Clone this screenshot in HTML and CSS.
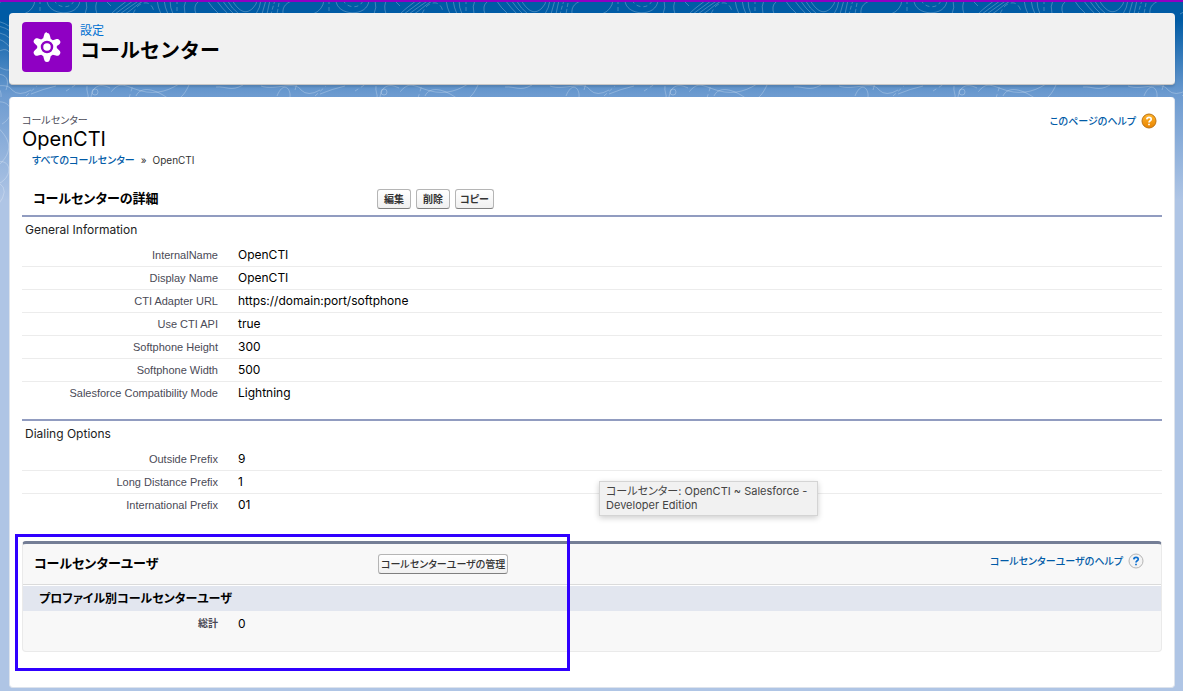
FILE: index.html
```html
<!DOCTYPE html>
<html lang="ja">
<head>
<meta charset="utf-8">
<title>コールセンター: OpenCTI ~ Salesforce - Developer Edition</title>
<link rel="stylesheet" href="styles.css">
</head>
<body>
<svg class="backdrop" aria-hidden="true">
  <defs>
    <pattern id="topo" width="289" height="280" patternUnits="userSpaceOnUse" x="111">
      <g fill="none" stroke="#fff" stroke-opacity=".25" stroke-width="1">
        <path d="M0 14C6 8 12 4 17 0M4 14C12 8 18 4 23 0M9 14C17 8 23 4 29 0M14 14C21 10 28 2 35 0"/>
        <path d="M22 14C25 7 28 4 33 3S42 6 43 12" stroke-dasharray="5 3"/>
        <path d="M46 0Q47 8 50 14M53 0Q54 8 57 14M59 0Q59 8 62 14M75 0Q72 6 74 14M85 14Q82 6 87 2"/>
        <path d="M66 0V14M218 0V14" stroke-dasharray="4 3"/>
        <path d="M96 0Q101 8 108 14M105 0Q111 8 117 14M111 0Q117 9 123 14M116 0Q121 9 128 14M121 0C127 10 134 16 142 8Q146 4 146 0M150 0Q149 8 145 14M155 0L151 14M159 0L156 14"/>
        <path d="M164 0L160 14M168 3L166 14" stroke-dasharray="4 2"/>
        <path d="M172 14C171 6 176 2 184 0M202 14Q212 10 213 0M225 0C225 16 257 18 258 0M264 0Q266 8 263 14M275 14Q272 5 276 0M283 0L289 6"/>
        <path d="M232 0C236 9 250 9 252 0" stroke-dasharray="4 3"/>
        <path d="M-5 97C8 83 8 83 24 89S54 93 68 84M25 96C30 85 45 90 55 97S72 98 78 85M105 87C115 86 120 92 132 85M150 86C164 91 184 80 190 90Q197 97 209 90M166 96C172 81 180 88 179 97M209 94Q221 89 234 86M265 86C264 91 267 95 266 98M269 97C271 84 280 84 288 88"/>
        <path d="M204 96L215 86M244 91L255 84M18 98L22 85" stroke-dasharray="4 3"/>
        <circle cx="273" cy="92" r="3"/>
        <path d="M170 20Q184 22 192 30M170 25Q184 26 195 36M170 32Q185 32 193 44M170 38Q182 38 190 50M172 55Q187 42 190 60T172 64M170 75C184 72 188 79 184 90M175 102C190 100 194 116 180 124M170 122C186 136 194 148 178 164M172 163C190 156 192 177 176 184M177 183Q188 190 176 205"/>
      </g>
    </pattern>
  </defs>
  <rect width="100%" height="280" fill="url(#topo)"/>
</svg>
<div class="page">
  <header class="banner">
    <span class="banner-icon">
      <svg viewBox="0 0 50 50" aria-hidden="true">
        <path d="M25 11c2 0 2.500 1 3 3l.8 3q1 .5 2 1.200l3-.9c2-.6 3-.2 4 1.300s.8 2.600-.7 4L34.800 24v2l2.300 2.200c1.500 1.400 1.700 2.500.7 4s-2 2-4 1.400l-3-.9q-1 .8-2 1.200l-.8 3c-.5 2-1 3-3 3s-2.500-1-3-3l-.8-3q-1-.5-2-1.200l-3 .9c-2 .6-3 .1-4-1.400s-.8-2.600.7-4l2.300-2.200v-2l-2.300-2.200c-1.500-1.400-1.700-2.500-.7-4s2-1.900 4-1.300l3 .9q1-.8 2-1.200l.8-3c.5-2 1-3 3-3z" fill="#fff"/>
        <circle cx="25" cy="25" r="5" fill="#fff" stroke="#8f00c3" stroke-width="2.500"/>
      </svg>
    </span>
    <h1 class="banner-title"><span class="banner-kicker">設定</span>コールセンター</h1>
  </header>

  <main class="sheet">
    <div class="top">
      <div>
        <h2 class="record"><span class="record-type">コールセンター</span>OpenCTI</h2>
        <nav class="crumbs"><a href="#">すべてのコールセンター</a><span>»</span><span>OpenCTI</span></nav>
      </div>
      <a class="help" href="#">このページのヘルプ
        <svg class="help-icon" viewBox="0 0 16 16" aria-hidden="true">
          <defs><linearGradient id="amber" x2="0" y2="1"><stop stop-color="#ffb52b"/><stop offset="1" stop-color="#e88300"/></linearGradient></defs>
          <circle cx="8" cy="8" r="7" fill="url(#amber)" stroke="#bc7212"/>
          <path d="M5.800 6.400C5.900 3.600 10.300 3.700 10.200 6.200C10.200 7.900 8 7.700 8 9.600M8 10.700V12.300" fill="none" stroke="#fff" stroke-width="1.700"/>
        </svg>
      </a>
    </div>

    <div class="toolbar">
      <h3 class="heading">コールセンターの詳細</h3>
      <div class="actions">
        <button type="button" class="btn">編集</button>
        <button type="button" class="btn">削除</button>
        <button type="button" class="btn btn-kana">コピー</button>
      </div>
    </div>

    <section class="group">
      <h4 class="group-title">General Information</h4>
      <table class="fields">
        <tr><th scope="row">InternalName</th><td>OpenCTI</td></tr>
        <tr><th scope="row">Display Name</th><td>OpenCTI</td></tr>
        <tr><th scope="row">CTI Adapter URL</th><td>https://domain:port/softphone</td></tr>
        <tr><th scope="row">Use CTI API</th><td>true</td></tr>
        <tr><th scope="row">Softphone Height</th><td>300</td></tr>
        <tr><th scope="row">Softphone Width</th><td>500</td></tr>
        <tr><th scope="row">Salesforce Compatibility Mode</th><td>Lightning</td></tr>
      </table>
    </section>

    <section class="group">
      <h4 class="group-title">Dialing Options</h4>
      <table class="fields">
        <tr><th scope="row">Outside Prefix</th><td>9</td></tr>
        <tr><th scope="row">Long Distance Prefix</th><td>1</td></tr>
        <tr><th scope="row">International Prefix</th><td>01</td></tr>
      </table>
    </section>

    <section class="users">
      <div class="users-head">
        <h3 class="heading">コールセンターユーザ</h3>
        <div class="actions"><button type="button" class="btn btn-wide">コールセンターユーザの管理</button></div>
        <a class="help" href="#">コールセンターユーザのヘルプ
          <svg class="help-icon" viewBox="0 0 16 16" aria-hidden="true">
            <circle cx="8" cy="8" r="7" fill="#f3f3f3" stroke="#b5b5b5"/>
            <path d="M5.800 6.400C5.900 3.600 10.300 3.700 10.200 6.200C10.200 7.900 8 7.700 8 9.600M8 10.700V12.300" fill="none" stroke="#0b6fd0" stroke-width="1.700"/>
          </svg>
        </a>
      </div>
      <h4 class="users-sub">プロファイル別コールセンターユーザ</h4>
      <table class="fields fields-total">
        <tr><th scope="row">総計</th><td>0</td></tr>
      </table>
      <div class="highlight"></div>
    </section>
    <div class="tooltip" role="tooltip">コールセンター: OpenCTI ~ Salesforce - Developer Edition</div>
  </main>
</div>
</body>
</html>
```
FILE: styles.css
```css
* { box-sizing: border-box; }

body {
  margin: 0;
  min-height: 100vh;
  border-top: 2px solid #8f00c3;
  background: #afc5e5 linear-gradient(#005ba5 0, #005ba5 20px, #6d9bd0 95px, #afc5e5 200px) no-repeat;
  color: #000;
  font-family: Inter, "Noto Sans CJK JP", sans-serif;
  font-size: 12px;
  font-feature-settings: "palt";
}

h1, h2, h3, h4 { margin: 0; font-weight: 400; }
a { color: #015ba7; text-decoration: none; }

.backdrop {
  position: absolute;
  top: 0;
  left: 0;
  z-index: -1;
  width: 100%;
  height: 280px;
}

.page {
  display: flex;
  flex-direction: column;
  gap: 12px;
  padding: 11px 8px 3px 9px;
}

.banner {
  display: flex;
  gap: 8px;
  min-height: 72px;
  padding: 9px 13px;
  border-bottom: 1px solid #c9c7c5;
  border-radius: 4px;
  background: #f1f1f1;
  box-shadow: 0 2px 2px rgba(0, 0, 0, .12);
}

.banner-icon {
  width: 50px;
  height: 50px;
  border-radius: 4px;
  background: #8f00c3;
}

.banner-icon svg { display: block; }

.banner-title {
  font-size: 20px;
  font-weight: 700;
  line-height: 24px;
  font-feature-settings: normal;
}

.banner-kicker {
  display: block;
  color: #0070d2;
  font-size: 12px;
  font-weight: 400;
  line-height: 17px;
}

.sheet {
  position: relative;
  padding: 14px 12px 35px;
  border: 1px solid #dde3ec;
  border-top: 0;
  border-radius: 4px;
  background: #fff;
}

.top {
  display: flex;
  justify-content: space-between;
  align-items: flex-start;
}

.record { font-size: 20px; line-height: 20px; }

.record-type {
  display: block;
  color: #4a4a56;
  font-size: 10px;
  line-height: 18px;
}

.crumbs {
  display: flex;
  gap: 6px;
  padding-left: 10px;
  color: #333;
  font-size: 10px;
  line-height: 22px;
}

.crumbs a { font-weight: 500; }

.help {
  display: flex;
  align-items: center;
  gap: 5px;
  padding-right: 5px;
  font-size: 10px;
  font-weight: 500;
  line-height: 20px;
}

.help-icon { width: 16px; height: 16px; }

.toolbar, .users-head {
  display: flex;
  align-items: center;
}

.toolbar { padding: 18px 0 6px 11px; }

.heading {
  width: 344px;
  padding-bottom: 2px;
  font-size: 13px;
  font-weight: 700;
  line-height: 18px;
}

.actions { display: flex; gap: 5px; }

.btn {
  height: 20px;
  padding: 0 6px 2px;
  border: 1px solid #b5b5b5;
  border-bottom-color: #7f7f7f;
  border-radius: 3px;
  background: linear-gradient(#fff, #f0f0f0);
  color: #333;
  font: 700 10px "Noto Sans CJK JP", sans-serif;
  font-feature-settings: "palt";
}

.btn-kana { padding: 0 4px 2px; }
.btn-wide { padding: 0 2px 2px; font-weight: 500; }

.group {
  border-top: 2px solid #919cc0;
  padding-bottom: 15px;
}

.group-title {
  margin-bottom: 1px;
  padding-left: 3px;
  color: #222;
  font-size: 12px;
  line-height: 26px;
}

.fields {
  width: 100%;
  border-collapse: collapse;
  line-height: 22px;
}

.fields tr + tr { border-top: 1px solid #ececec; }

.fields th {
  width: 206px;
  padding: 0 10px 0 0;
  color: #4a4a56;
  font-family: "Liberation Sans", "Noto Sans CJK JP", sans-serif;
  font-size: 11px;
  font-weight: 400;
  text-align: right;
}

.fields td { padding: 0 0 0 10px; }

.fields-total th {
  width: 205px;
  font-size: 10px;
  font-weight: 700;
}

.users {
  position: relative;
  margin-top: 10px;
  padding-bottom: 16px;
  border: 1px solid #eaeaea;
  border-top: 3px solid #747e96;
  border-radius: 4px;
  background: #f8f8f8;
}

.users-head {
  min-height: 41px;
  padding: 0 12px 0 11px;
  border-bottom: 1px solid #dbdbdb;
}

.users-head .help {
  margin-left: auto;
  padding-bottom: 6px;
}

.users-sub {
  margin: 1px 0 2px;
  padding-left: 16px;
  background: #e2e6ef;
  box-shadow: 0 -1px #fff;
  font-size: 12px;
  font-weight: 700;
  line-height: 25px;
}

.highlight {
  position: absolute;
  top: -10px;
  left: -8px;
  width: 555px;
  height: 137px;
  border: 3px solid #3000ff;
  pointer-events: none;
}

.tooltip {
  position: absolute;
  top: 384px;
  left: 589px;
  width: 219px;
  padding: 2px 2px 3px 6px;
  border: 1px solid #d4d4d4;
  background: #f1f1f1;
  box-shadow: 0 2px 6px rgba(0, 0, 0, .2);
  color: #444;
  font-size: 11px;
  line-height: 14px;
}
```
